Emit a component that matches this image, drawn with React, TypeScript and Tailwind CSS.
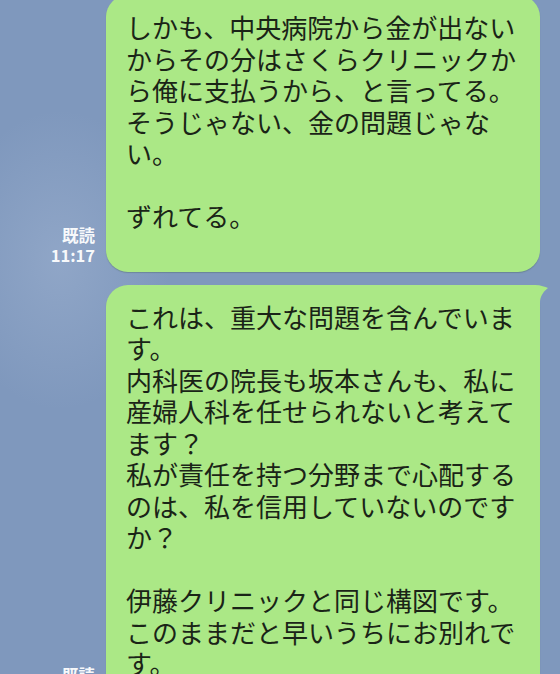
import type { ReactNode } from "react";

const bubble1 = [
  "しかも、中央病院から金が出ない",
  "からその分はさくらクリニックか",
  "ら俺に支払うから、と言ってる。",
  "そうじゃない、金の問題じゃな",
  "い。",
  "",
  "ずれてる。",
];

const bubble2 = [
  "これは、重大な問題を含んでいま",
  "す。",
  "内科医の院長も坂本さんも、私に",
  "産婦人科を任せられないと考えて",
  "ます？",
  "私が責任を持つ分野まで心配する",
  "のは、私を信用していないのです",
  "か？",
  "",
  "伊藤クリニックと同じ構図です。",
  "このままだと早いうちにお別れで",
  "す。",
];

function ReadMark() {
  return (
    <div className="flex w-[106px] shrink-0 flex-col items-end pb-[7px] pr-[11px] text-[16.5px] font-bold leading-[20px] text-white/95">
      <span>既読</span>
      <span>11:17</span>
    </div>
  );
}

function Bubble({ lines, tail, last, children }: { lines: string[]; tail?: boolean; last?: boolean; children?: ReactNode }) {
  return (
    <div
      className={
        "relative w-[434px] shrink-0 rounded-[22px] bg-[#abe886] pl-[20px] pr-[12px] pt-[16px] shadow-[0_1px_1px_rgba(40,70,40,0.25)] " +
        (last ? "pb-[33px]" : "pb-[40px]")
      }
    >
      {tail && (
        <svg className="absolute -right-[9px] top-0" width="34" height="30" viewBox="0 0 34 30">
          <path d="M0 0 L20 0 C26 0 30 2 33 3 C29 6 26 10 25 16 L25 30 L0 30 Z" fill="#abe886" />
        </svg>
      )}
      <div className="relative text-[26px] leading-[31.5px] text-[#1a2417]">
        {lines.map((l, i) => (
          <div key={i} className="h-[31.5px] whitespace-nowrap">
            {l}
          </div>
        ))}
      </div>
      {children}
    </div>
  );
}

export default function App() {
  return (
    <div
      className="relative h-[674px] w-[560px] overflow-hidden bg-[#7f98bd] bg-[radial-gradient(ellipse_110px_150px_at_60px_260px,rgba(175,192,218,0.35),rgba(127,152,189,0)_100%)]"
      style={{ fontFamily: '"Noto Sans CJK JP", "Noto Sans", sans-serif' }}
    >
      <div className="-mt-[5px] flex flex-col gap-[13px]">
        <div className="flex items-end">
          <ReadMark />
          <Bubble lines={bubble1} />
        </div>
        <div className="flex items-end">
          <ReadMark />
          <Bubble lines={bubble2} tail last />
        </div>
      </div>
    </div>
  );
}
